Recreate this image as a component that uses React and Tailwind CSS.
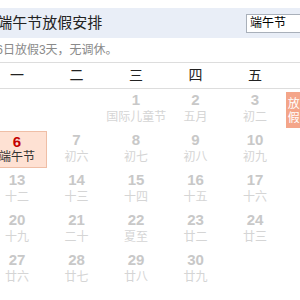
import React from 'react';

const CJK = { fontFamily: '"Liberation Sans", "Noto Sans CJK SC", sans-serif' };

const WEEK = ['一', '二', '三', '四', '五', '六', '日'];

// June, week starting Monday; null = blank cell
const ROWS = [
  [null, null, [1, '国际儿童节'], [2, '五月'], [3, '初二'], [4, '初三', 'off'], [5, '初四', 'off']],
  [[6, '端午节', 'today'], [7, '初六'], [8, '初七'], [9, '初八'], [10, '初九'], [11, '初十'], [12, '十一']],
  [[13, '十二'], [14, '十三'], [15, '十四'], [16, '十五'], [17, '十六'], [18, '十七'], [19, '十八']],
  [[20, '十九'], [21, '二十'], [22, '夏至'], [23, '廿二'], [24, '廿三'], [25, '廿四'], [26, '廿五']],
  [[27, '廿六'], [28, '廿七'], [29, '廿八'], [30, '廿九'], null, null, null],
];

const DayCell = ({ day }) => {
  if (!day) return <div className="h-[40px]" />;
  const [num, lunar, kind] = day;

  if (kind === 'today') {
    return (
      <div className="h-[40px]">
        <div className="mt-[2px] h-[37px] border border-[#efbea6] bg-[#fee1d3] pt-[2px] text-center">
          <div className="text-[15px] font-bold leading-[16px] text-[#c40000]">{num}</div>
          <div className="text-[12px] leading-[14px] text-[#333]">{lunar}</div>
        </div>
      </div>
    );
  }

  return (
    <div className="relative h-[40px] pt-[3px] text-center">
      {kind === 'off' && (
        <div className="absolute left-[1px] top-[3px] h-[36px] w-[16px] bg-[#f4a589] pt-[5px] text-[12px] leading-[14px] text-white">
          <div>放</div>
          <div>假</div>
        </div>
      )}
      <div className="text-[15px] font-bold leading-[16px] text-[#c8c8c8]">{num}</div>
      <div className="whitespace-nowrap text-[12px] leading-[18px] text-[#d5d5d5]">{lunar}</div>
    </div>
  );
};

export default function App() {
  return (
    <div className="h-[300px] w-[300px] overflow-hidden bg-white" style={CJK}>
      <div className="ml-[-12.75px] w-[416.5px]">
        {/* title bar */}
        <div className="mt-[8px] flex h-[30px] items-center bg-[#e9eef7]">
          <div className="w-[258.75px] shrink-0 pl-[10px] text-[15px] leading-[20px] text-[#222]">端午节放假安排</div>
          <div className="flex h-[19px] w-[80px] shrink-0 items-center border border-[#a9b0ba] bg-white pl-[3px] text-[12px] text-black">
            端午节
          </div>
        </div>

        <div className="flex h-[24px] items-center pl-[9px] text-[12px] text-[#8a8a8a]">6日放假3天，无调休。</div>

        {/* weekday header */}
        <div className="grid h-[27px] grid-cols-7 items-center border-y border-[#dddddd] text-[14px] text-[#222]">
          {WEEK.map((w) => (
            <div key={w} className="text-center">{w}</div>
          ))}
        </div>

        {ROWS.map((row, i) => (
          <div key={i} className="grid grid-cols-7">
            {row.map((day, j) => (
              <DayCell key={j} day={day} />
            ))}
          </div>
        ))}
      </div>
    </div>
  );
}
